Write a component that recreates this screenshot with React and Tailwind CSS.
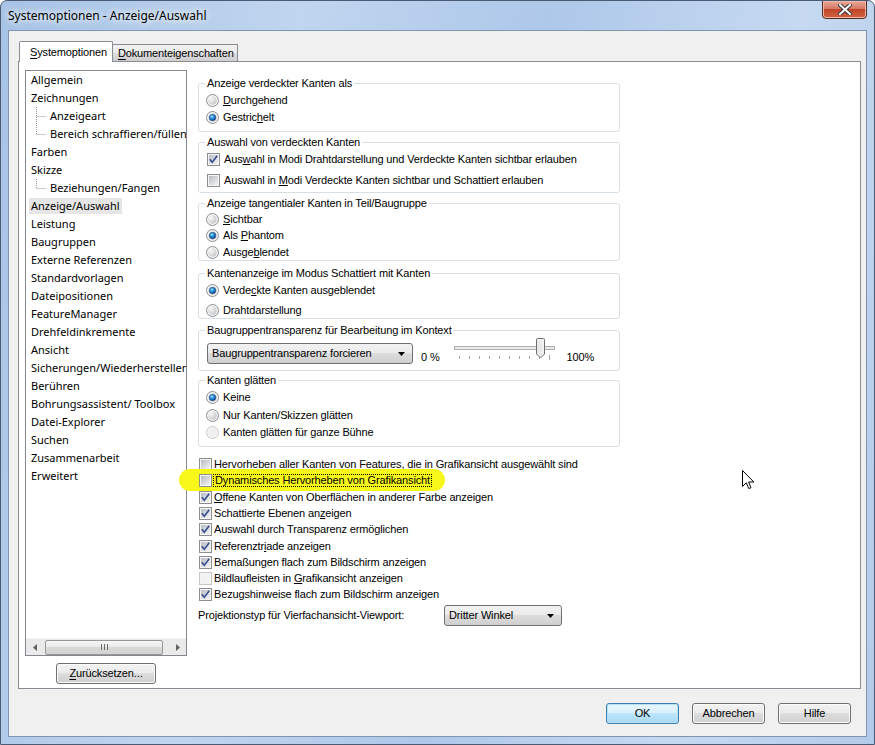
import React from 'react';

const tah = "font-['Liberation_Sans',Arial,sans-serif] text-[11px] leading-[13px] tracking-[-0.14px] text-black";
const seg = "font-['Noto_Sans',sans-serif] text-[11px] text-black";

function Check({ checked, disabled }) {
  return (
    <svg width="13" height="13" viewBox="0 0 13 13" className="shrink-0">
      <defs>
        <linearGradient id="cbIn" x1="0" y1="0" x2="1" y2="1">
          <stop offset="0" stopColor="#b8bcc2" />
          <stop offset="1" stopColor="#f4f4f5" />
        </linearGradient>
      </defs>
      <rect x="0.5" y="0.5" width="12" height="12" fill="#f5f5f5" stroke={disabled ? '#c7c7c7' : '#8e8f8f'} />
      <rect x="2" y="2" width="9" height="9" fill={disabled ? '#f2f2f2' : 'url(#cbIn)'} />
      {checked && (
        <path d="M2.8 6.2 L5.3 9.2 L10.2 2.8" fill="none" stroke="#3c4f93" strokeWidth="1.7" />
      )}
    </svg>
  );
}

function Radio({ checked, disabled }) {
  return (
    <svg width="13" height="13" viewBox="0 0 13 13" className="shrink-0">
      <defs>
        <radialGradient id="rbIn" cx="0.3" cy="0.3" r="0.8">
          <stop offset="0" stopColor="#f8f8f8" />
          <stop offset="1" stopColor="#c4c6c9" />
        </radialGradient>
        <radialGradient id="rbDot" cx="0.4" cy="0.35" r="0.7">
          <stop offset="0" stopColor="#9fe0ff" />
          <stop offset="0.5" stopColor="#1a8ad8" />
          <stop offset="1" stopColor="#0b3f8a" />
        </radialGradient>
      </defs>
      <circle cx="6.5" cy="6.5" r="6" fill="#f4f4f4" stroke={disabled ? '#cacaca' : '#8c8e90'} />
      <circle cx="6.5" cy="6.5" r="4.3" fill={disabled ? '#efefef' : 'url(#rbIn)'} />
      {checked && <circle cx="6.5" cy="6.5" r="3.2" fill="url(#rbDot)" stroke="#1e3f70" strokeWidth="0.6" />}
    </svg>
  );
}

function Combo({ text, className }) {
  return (
    <div
      className={`${className} h-[21px] flex items-center justify-between rounded-[3px] border border-[#707070] bg-[linear-gradient(#f2f2f2,#ebebeb_45%,#dddddd_50%,#cfcfcf)] pl-[4px] pr-[7px] ${tah}`}
    >
      <span>{text}</span>
      <svg width="7" height="4" viewBox="0 0 7 4">
        <path d="M0 0h7L3.5 4z" fill="#000" />
      </svg>
    </div>
  );
}

function Group({ title, className, children }) {
  return (
    <fieldset className={`${className} m-0 p-0 border border-[#d5dfe5] rounded-[3px] min-w-0`}>
      <legend className={`ml-[6px] px-[2px] ${tah} leading-[14px]`}>{title}</legend>
      {children}
    </fieldset>
  );
}

function Opt({ radio, checked, disabled, h, pl = 'pl-[7px]', gap = 'gap-[4px]', children }) {
  return (
    <div className={`${h} ${pl} ${gap} flex items-center ${tah} ${disabled ? 'text-[#a0a0a0]' : ''}`}>
      {radio ? <Radio checked={checked} disabled={disabled} /> : <Check checked={checked} disabled={disabled} />}
      <span className="whitespace-nowrap">{children}</span>
    </div>
  );
}

function Btn({ children, def, className = '' }) {
  return (
    <div
      className={`${className} h-[21px] flex items-center justify-center rounded-[3px] border ${
        def
          ? 'border-[#3c7fb1] bg-[linear-gradient(#eaf6fd,#d9f0fc_45%,#bee6fd_50%,#a7d9f5)] shadow-[inset_0_0_0_1px_#b8e1f8]'
          : 'border-[#707070] bg-[linear-gradient(#f2f2f2,#ebebeb_45%,#dddddd_50%,#cfcfcf)] shadow-[inset_0_0_0_1px_#fcfcfc]'
      } ${tah}`}
    >
      {children}
    </div>
  );
}

const treeItems = [
  { t: 'Allgemein' },
  { t: 'Zeichnungen' },
  { t: 'Anzeigeart', c: 1 },
  { t: 'Bereich schraffieren/füllen', c: 1, last: 1 },
  { t: 'Farben' },
  { t: 'Skizze' },
  { t: 'Beziehungen/Fangen', c: 1, last: 1 },
  { t: 'Anzeige/Auswahl', sel: 1 },
  { t: 'Leistung' },
  { t: 'Baugruppen' },
  { t: 'Externe Referenzen' },
  { t: 'Standardvorlagen' },
  { t: 'Dateipositionen' },
  { t: 'FeatureManager' },
  { t: 'Drehfeldinkremente' },
  { t: 'Ansicht' },
  { t: 'Sicherungen/Wiederherstellen' },
  { t: 'Berühren' },
  { t: 'Bohrungsassistent/ Toolbox' },
  { t: 'Datei-Explorer' },
  { t: 'Suchen' },
  { t: 'Zusammenarbeit' },
  { t: 'Erweitert' },
];

function Tree() {
  return (
    <div className="w-[162px] h-[586px] border border-[#828790] bg-white flex flex-col overflow-hidden">
      <div className="flex-1 flex flex-col pl-[3px]">
        {treeItems.map((it) => (
          <div key={it.t} className="h-[18px] flex items-center whitespace-nowrap">
            {it.c ? (
              <svg width="13" height="18" viewBox="0 0 13 18" className="ml-[6px] shrink-0">
                <line x1="1.5" y1="0" x2="1.5" y2={it.last ? 9 : 18} stroke="#9a9a9a" strokeDasharray="1 1" />
                <line x1="1.5" y1="9.5" x2="11" y2="9.5" stroke="#9a9a9a" strokeDasharray="1 1" />
              </svg>
            ) : null}
            <span className={`${seg} leading-[16px] px-[2px] ${it.sel ? 'bg-[#e6e6e6]' : ''}`}>{it.t}</span>
          </div>
        ))}
      </div>
      <div className="h-[17px] flex items-center bg-[#eaeaea] border-t border-[#f4f4f4]">
        <div className="w-[17px] h-full flex items-center justify-center">
          <svg width="4" height="7" viewBox="0 0 4 7"><path d="M4 0v7L0 3.5z" fill="#606060" /></svg>
        </div>
        <div className="ml-[2px] w-[118px] h-[15px] rounded-[2px] border border-[#979797] bg-[linear-gradient(#f6f6f6,#e9e9e9_50%,#d9d9d9_50%,#d2d2d2)] flex items-center justify-center">
          <svg width="7" height="6" viewBox="0 0 7 6">
            <path d="M0.5 0v6M3.5 0v6M6.5 0v6" stroke="#6c6c6c" />
          </svg>
        </div>
        <div className="flex-1" />
        <div className="w-[17px] h-full flex items-center justify-center">
          <svg width="4" height="7" viewBox="0 0 4 7"><path d="M0 0v7L4 3.5z" fill="#606060" /></svg>
        </div>
      </div>
    </div>
  );
}

function Slider() {
  const ticks = [5, 15, 25, 35, 45, 55, 65, 75, 85, 95];
  return (
    <svg width="104" height="24" viewBox="0 0 104 24" className="ml-[14px] -mt-[5px] shrink-0">
      <rect x="0.5" y="8.5" width="100" height="3" fill="#e7eaea" stroke="#b0b0b0" />
      {ticks.map((x) => (
        <line key={x} x1={x + 0.5} y1="18" x2={x + 0.5} y2="21" stroke="#a4a4a4" />
      ))}
      <line x1="95.5" y1="17" x2="95.5" y2="22" stroke="#a4a4a4" />
      <path d="M82.5 1.5 Q82.5 0.5 83.5 0.5 H89.5 Q90.5 0.5 90.5 1.5 V16 L86.5 20 L82.5 16 Z" fill="#e9e9e9" stroke="#707070" />
      <path d="M84 2 H89 V15" fill="none" stroke="#fbfbfb" />
    </svg>
  );
}

function Cursor() {
  return (
    <svg width="13" height="20" viewBox="0 0 13 20" className="absolute left-[741px] top-[469px]">
      <path d="M0.5 0.5 V16.5 L4.3 12.8 L6.8 18.6 L9 17.6 L6.6 12 H11.8 Z" fill="#fff" stroke="#000" />
    </svg>
  );
}

export default function App() {
  return (
    <div className="relative w-[875px] h-[745px] overflow-hidden rounded-t-[7px] border border-[#4b5b74] bg-[linear-gradient(100deg,#a7c3e6,#c0d5ef_30%,#aec8ea_55%,#c6d9f1_80%,#b3cbea)] flex flex-col">
      {/* title bar */}
      <div className="h-[29px] shrink-0 flex items-start justify-between">
        <div className={`${seg} text-[12px] pl-[7px] pt-[6px] [text-shadow:0_0_6px_#fff,0_0_10px_#fff]`}>
          Systemoptionen - Anzeige/Auswahl
        </div>
        <div className="mr-[7px] -mt-px w-[45px] h-[19px] rounded-b-[4px] border border-[#5a2a22] bg-[linear-gradient(#e9a99b,#d47a63_45%,#c2442b_50%,#d1653f)] flex items-center justify-center shadow-[inset_0_0_0_1px_#f0b8a8]">
          <svg width="14" height="11" viewBox="0 0 14 11">
            <path d="M2 1 L12 10 M12 1 L2 10" stroke="#3a3a3a" strokeWidth="4" strokeLinecap="square" />
            <path d="M2 1 L12 10 M12 1 L2 10" stroke="#ffffff" strokeWidth="2" strokeLinecap="square" />
          </svg>
        </div>
      </div>

      {/* client area */}
      <div className="flex-1 mx-[7px] mb-[7px] border border-[#8194ae] bg-[#f0f0f0] flex flex-col">
        {/* tabs */}
        <div className="mt-[10px] ml-[10px] flex items-end h-[20px] relative z-10">
          <div className={`h-[21px] -mb-px pl-[10px] pr-[5px] flex items-center border border-b-0 border-[#898c95] bg-white rounded-t-[2px] ${tah}`}>
            <span><u className="underline-offset-2">S</u>ystemoptionen</span>
          </div>
          <div className={`h-[17px] pl-[5px] pr-[3px] flex items-center border border-l-0 border-b-0 border-[#898c95] bg-[linear-gradient(#f2f2f2,#ebebeb_50%,#dddddd_50%,#cfcfcf)] ${tah}`}>
            <span><u className="underline-offset-2">D</u>okumenteigenschaften</span>
          </div>
        </div>

        {/* tab page */}
        <div className="ml-[9px] mr-[5px] h-[628px] border border-[#898c95] bg-white flex pl-[6px] pt-[8px]">
          {/* left column */}
          <div className="w-[162px] flex flex-col items-center">
            <Tree />
            <Btn className="mt-[7px] w-[100px]">
              <span><u className="underline-offset-2">Z</u>urücksetzen...</span>
            </Btn>
          </div>

          {/* right column */}
          <div className="ml-[11px] w-[422px] flex flex-col mt-[6px]">
            <Group title="Anzeige verdeckter Kanten als" className="h-[56px]">
              <div className="pt-[2px]">
                <Opt radio h="h-[17px]"><u>D</u>urchgehend</Opt>
                <Opt radio checked h="h-[17px]">Gestric<u>h</u>elt</Opt>
              </div>
            </Group>

            <Group title="Auswahl von verdeckten Kanten" className="h-[58px] mt-[3px]">
              <div className="pl-[1px]">
                <Opt checked h="h-[21px]">Aus<u>w</u>ahl in Modi Drahtdarstellung und Verdeckte Kanten sichtbar erlauben</Opt>
                <Opt h="h-[21px]">Auswahl in <u>M</u>odi Verdeckte Kanten sichtbar und Schattiert erlauben</Opt>
              </div>
            </Group>

            <Group title="Anzeige tangentialer Kanten in Teil/Baugruppe" className="h-[65px] mt-[3px]">
              <div className="pt-[1px]">
                <Opt radio h="h-[16.5px]"><u>S</u>ichtbar</Opt>
                <Opt radio checked h="h-[16.5px]">Als <u>P</u>hantom</Opt>
                <Opt radio h="h-[16.5px]">Ausge<u>b</u>lendet</Opt>
              </div>
            </Group>

            <Group title="Kantenanzeige im Modus Schattiert mit Kanten" className="h-[53px] mt-[5px]">
              <div>
                <Opt radio checked h="h-[20px]">Verde<u>c</u>kte Kanten ausgeblendet</Opt>
                <Opt radio h="h-[20px]">Drahtdarstellung</Opt>
              </div>
            </Group>

            <Group title="Baugruppentransparenz für Bearbeitung im Kontext" className="h-[48px] mt-[4px]">
              <div className="flex items-start pt-[6px] pl-[8px]">
                <Combo text="Baugruppentransparenz forcieren" className="w-[206px]" />
                <span className={`${tah} ml-[8px] mt-[8px]`}>0 %</span>
                <Slider />
                <span className={`${tah} ml-[9px] mt-[8px]`}>100%</span>
              </div>
            </Group>

            <Group title="Kanten glätten" className="h-[74px] mt-[2px]">
              <div className="pt-[2px]">
                <Opt radio checked h="h-[17.5px]">Keine</Opt>
                <Opt radio h="h-[17.5px]">Nur Kanten/Skizzen glätten</Opt>
                <Opt radio disabled h="h-[17.5px]">Kanten glätten für ganze Bühne</Opt>
              </div>
            </Group>

            <div className="mt-[9px] flex flex-col">
              <Opt h="h-[16.25px]" pl="pl-[1px]" gap="gap-[2px]">Her<u>v</u>orheben aller Kanten von Features, die in Grafikansicht ausgewählt sind</Opt>
              <div className="relative h-[17px]">
                <div className="absolute -left-[19px] top-[-3px] w-[266px] h-[22px] rounded-full bg-[#f7f71a] blur-[0.6px]" />
                <div className={`relative h-full pl-[1px] gap-[1px] flex items-center ${tah}`}>
                  <Check />
                  <span className="whitespace-nowrap border border-dotted border-black px-[1px] leading-[11px]">
                    Dynamisches Hervorheben von Grafikansicht
                  </span>
                </div>
              </div>
              <Opt checked h="h-[16.25px]" pl="pl-[1px]" gap="gap-[2px]"><u>O</u>ffene Kanten von Oberflächen in anderer Farbe anzeigen</Opt>
              <Opt checked h="h-[16.25px]" pl="pl-[1px]" gap="gap-[2px]">Schattierte Ebenen an<u>z</u>eigen</Opt>
              <Opt checked h="h-[16.25px]" pl="pl-[1px]" gap="gap-[2px]">Auswahl durch Transparenz ermöglichen</Opt>
              <Opt checked h="h-[16.25px]" pl="pl-[1px]" gap="gap-[2px]">Referenztr<u>i</u>ade anzeigen</Opt>
              <Opt checked h="h-[16.25px]" pl="pl-[1px]" gap="gap-[2px]">Bemaßungen flach zum Bildschirm anzeigen</Opt>
              <Opt disabled h="h-[16.25px]" pl="pl-[1px]" gap="gap-[2px]">Bildlaufleisten in <u>G</u>rafikansicht anzeigen</Opt>
              <Opt checked h="h-[16.25px]" pl="pl-[1px]" gap="gap-[2px]">Bezugshinweise flach zum Bildschirm anzeigen</Opt>
            </div>

            <div className="mt-[2px] flex items-center">
              <span className={`${tah} w-[246px] whitespace-nowrap`}>Projektionstyp für Vierfachansicht-Viewport:</span>
              <Combo text="Dritter Winkel" className="w-[118px]" />
            </div>
          </div>
        </div>

        {/* dialog buttons */}
        <div className="mt-[14px] mr-[15px] flex justify-end gap-[13px]">
          <Btn def className="w-[73px]">OK</Btn>
          <Btn className="w-[73px]">Abbrechen</Btn>
          <Btn className="w-[73px]">Hilfe</Btn>
        </div>
      </div>

      <Cursor />
    </div>
  );
}
